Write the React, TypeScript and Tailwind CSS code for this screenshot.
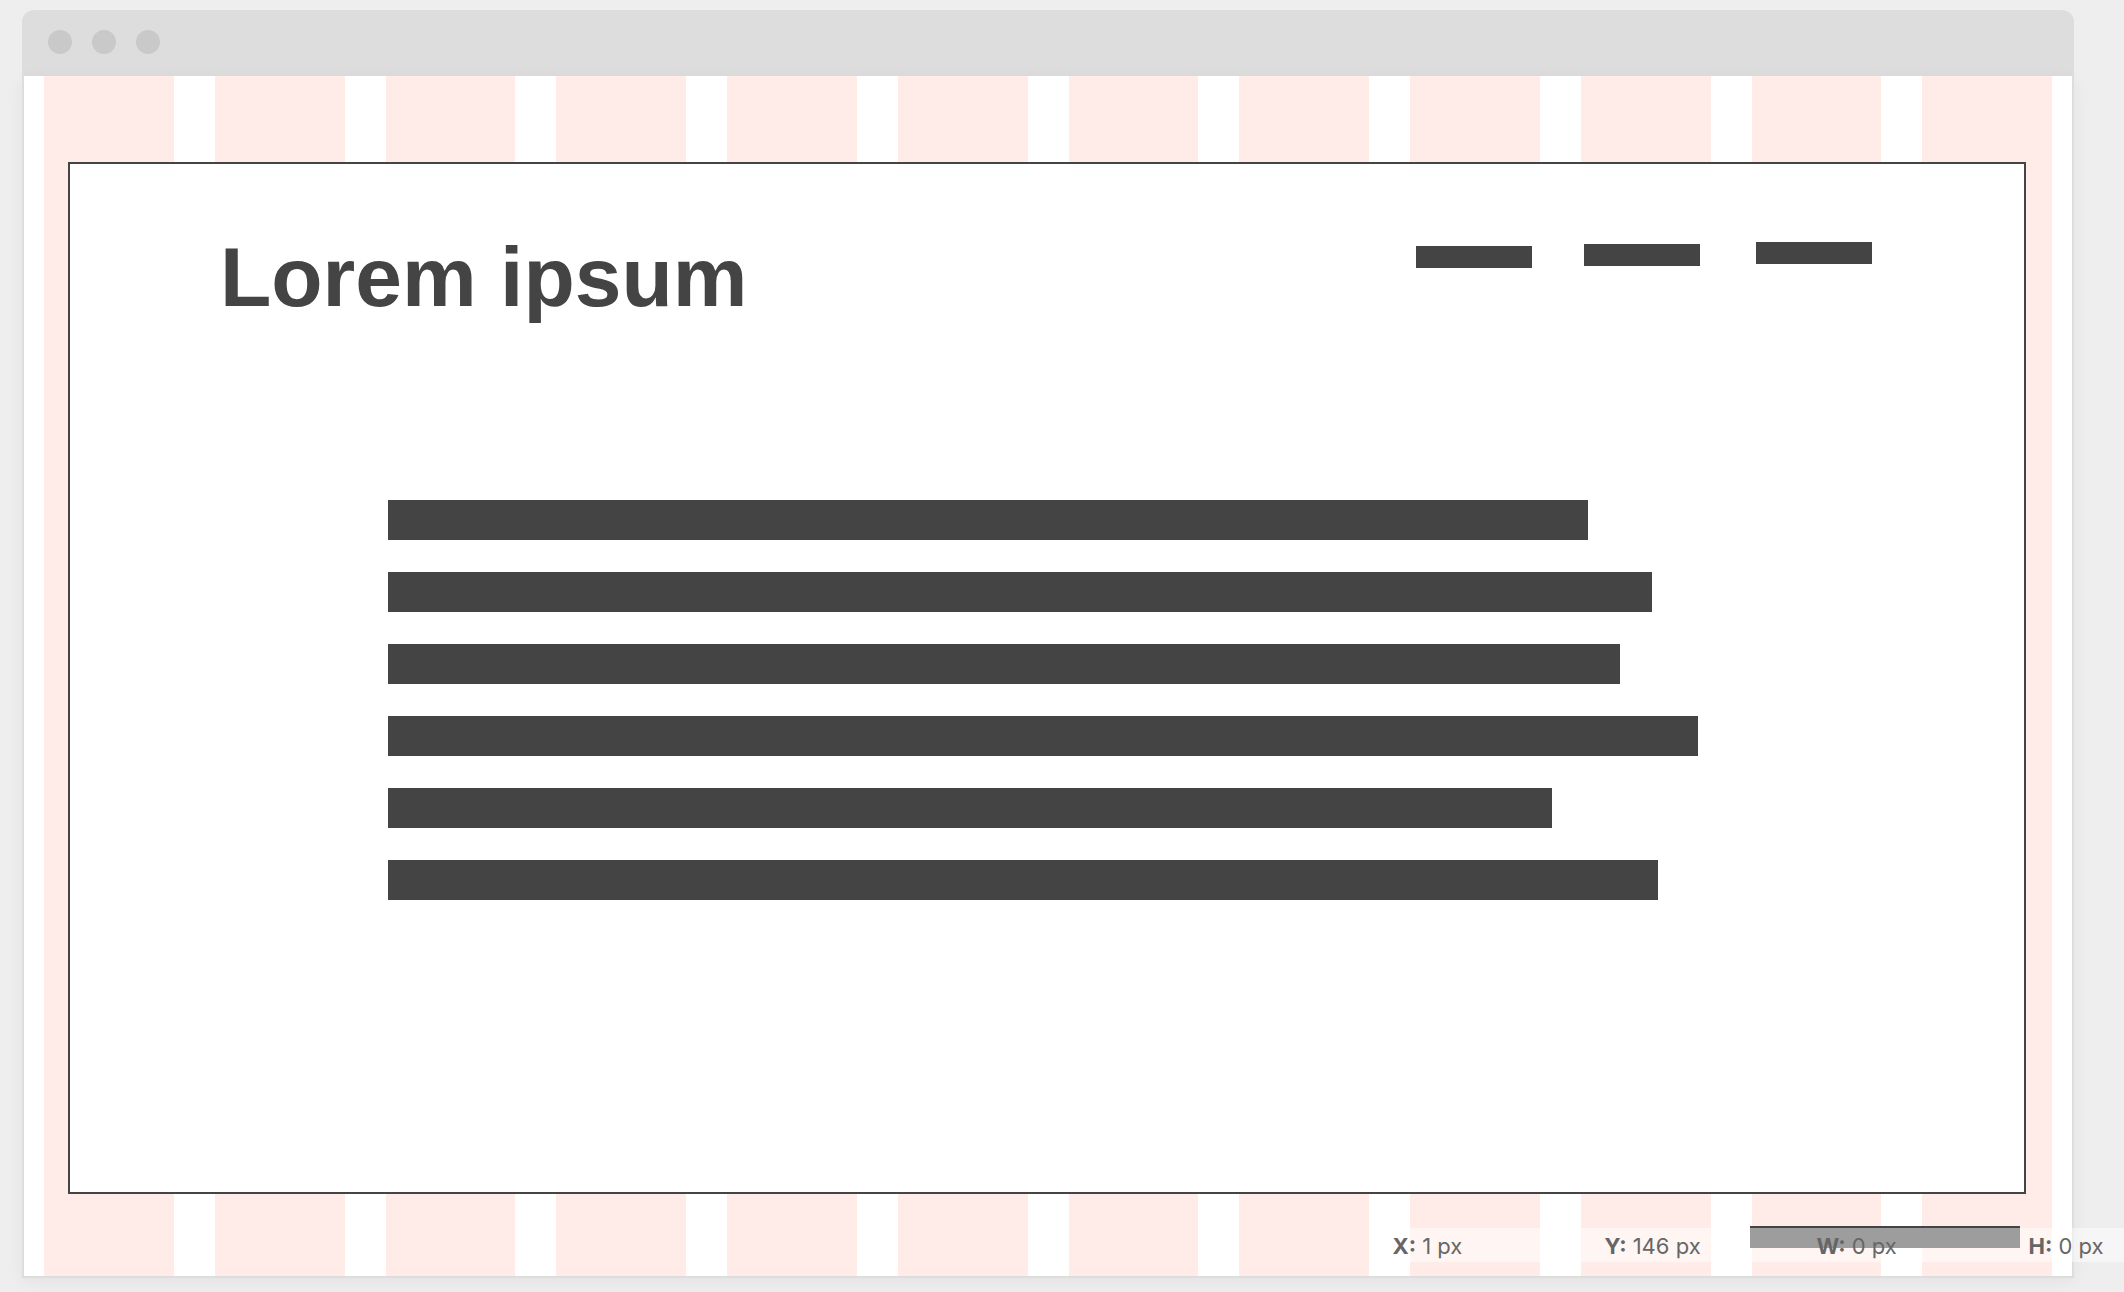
const columns = Array.from({ length: 12 }, (_, i) => i);

const lines = [
  "w-[1200px]",
  "w-[1264px]",
  "w-[1232px]",
  "w-[1310px]",
  "w-[1164px]",
  "w-[1270px]",
];

const navItems = [
  { label: "First", spacing: "mt-1" },
  { label: "Second", spacing: "mt-0.5 ml-13" },
  { label: "Third", spacing: "ml-14" },
];

const readings = [
  { name: "X", value: "1 px" },
  { name: "Y", value: "146 px" },
  { name: "W", value: "0 px" },
  { name: "H", value: "0 px" },
];

function TitleBar() {
  return (
    <header className="flex h-[66px] shrink-0 items-start gap-5 rounded-t-xl bg-[#dddddd] px-[26px] pt-5">
      <button aria-label="Close" className="size-6 rounded-full bg-[#c9c9c9]" />
      <button aria-label="Minimise" className="size-6 rounded-full bg-[#c9c9c9]" />
      <button aria-label="Zoom" className="size-6 rounded-full bg-[#c9c9c9]" />
    </header>
  );
}

function ColumnGuides() {
  return (
    <div aria-hidden="true" className="absolute inset-0 grid grid-cols-12 gap-x-[41px] px-5">
      {columns.map((c) => (
        <div key={c} className="bg-[#ffebe8]" />
      ))}
    </div>
  );
}

function Artboard() {
  return (
    <article className="flex-1 border-2 border-[#444444] bg-white">
      <div className="flex items-start justify-between pt-[78px] pr-[152px] pl-[150px]">
        <h1 className="text-[84px] leading-[70px] font-bold text-[#444444]">Lorem ipsum</h1>
        <nav className="flex items-start">
          {navItems.map((item) => (
            <a
              key={item.label}
              href="#"
              aria-label={item.label}
              className={`block h-[22px] w-[116px] bg-[#444444] ${item.spacing}`}
            />
          ))}
        </nav>
      </div>
      <div className="mt-[188px] flex flex-col gap-8 pl-[318px]">
        {lines.map((width) => (
          <div key={width} className={`h-10 max-w-full bg-[#444444] ${width}`} />
        ))}
      </div>
    </article>
  );
}

function Readout() {
  return (
    <dl className="absolute right-0 bottom-[30px] left-[65%] flex h-[34px] overflow-hidden bg-white/48 pl-3 font-[Inter,sans-serif] text-[22px] leading-9 text-[#666666]">
      {readings.map((r) => (
        <div key={r.name} className="flex w-[212px] shrink-0 gap-1.5">
          <dt className="font-bold">{r.name}:</dt>
          <dd>{r.value}</dd>
        </div>
      ))}
    </dl>
  );
}

export default function App() {
  return (
    <div className="relative flex min-h-screen flex-col overflow-hidden bg-[#eeeeee] pt-2.5 pr-[50px] pb-3.5 pl-[22px] font-['Liberation_Sans',Arial,sans-serif]">
      <TitleBar />
      <main className="relative flex flex-1 flex-col border-2 border-t-0 border-[#dddddd] bg-white shadow-[0_4px_16px_rgba(0,0,0,0.05)]">
        <ColumnGuides />
        <div className="relative flex flex-1 flex-col pt-[86px] pr-[46px] pb-7 pl-11">
          <Artboard />
          <div className="mt-8 mr-1.5 h-[22px] w-[270px] self-end bg-[#444444]" />
        </div>
      </main>
      <Readout />
    </div>
  );
}
